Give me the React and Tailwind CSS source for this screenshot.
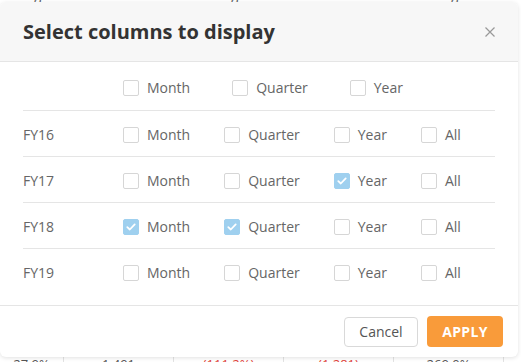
import React, { useState } from "react";

const years = ["FY16", "FY17", "FY18", "FY19"];

const initialChecked = {
  "FY17-Year": true,
  "FY18-Month": true,
  "FY18-Quarter": true,
};

const Check = ({ checked, onChange, label }) => (
  <label className="flex items-center gap-2 cursor-pointer select-none">
    <span
      onClick={onChange}
      className={`w-4 h-4 rounded-[2px] border flex items-center justify-center ${
        checked ? "bg-[#9fd0ef] border-[#9fd0ef]" : "bg-white border-[#d6d6d6]"
      }`}
    >
      {checked && (
        <svg width="10" height="8" viewBox="0 0 10 8" fill="none">
          <path d="M1.3 4.2 3.8 6.5 8.7 1.4" stroke="white" strokeWidth="1.8" strokeLinecap="round" strokeLinejoin="round" />
        </svg>
      )}
    </span>
    <span className="text-sm text-[#666]">{label}</span>
  </label>
);

// table peeking out behind the dialog
const BackTable = () => (
  <div className="absolute inset-0 bg-white text-[13px] text-[#555]">
    <div className="flex h-[6px] border-b border-[#e3e3e3] -mt-[13px]">
      {["Budget", "Actual", "Budget", "Actual", "Budget"].map((t, i) => (
        <div key={i} className="w-[110px] first:w-[64px] border-r border-[#e3e3e3] text-center leading-[16px]">
          {t}
        </div>
      ))}
    </div>
    <div className="absolute left-0 right-0 top-[356px] flex h-[20px]">
      {[
        ["27.9%", "text-[#555]"],
        ["1,491", "text-[#555]"],
        ["(111.2%)", "text-[#e0443b]"],
        ["(1,281)", "text-[#e0443b]"],
        ["269.0%", "text-[#555]"],
      ].map(([t, c], i) => (
        <div key={i} className={`w-[110px] first:w-[64px] border-r border-[#e3e3e3] text-center leading-[16px] ${c}`}>
          {t}
        </div>
      ))}
    </div>
  </div>
);

export default function App() {
  const [checked, setChecked] = useState(initialChecked);
  const toggle = (k) => setChecked((s) => ({ ...s, [k]: !s[k] }));

  return (
    <div className="relative w-[521px] h-[362px] overflow-hidden" style={{ fontFamily: '"Open Sans", sans-serif' }}>
      <BackTable />

      {/* Dialog */}
      <div className="absolute left-0 top-[2px] w-[518px] h-[355px] bg-white rounded-md shadow-[0_1px_4px_rgba(0,0,0,0.12)] flex flex-col overflow-hidden">
        <div className="h-[60px] shrink-0 bg-[#f7f7f7] border-b border-[#e5e5e5] flex items-center justify-between pl-[23px] pr-[23px]">
          <h2 className="text-[20px] font-bold text-[#333]">Select columns to display</h2>
          <button className="text-[#999]">
            <svg width="10" height="10" viewBox="0 0 10 10">
              <path d="M0.5 0.5 9.5 9.5M9.5 0.5 0.5 9.5" stroke="currentColor" strokeWidth="1.2" />
            </svg>
          </button>
        </div>

        <div className="px-[23px] flex-1">
          <div className="h-[49px] pt-[4px] flex items-center gap-[42px] pl-[100px] border-b border-[#e5e5e5]">
            <Check label="Month" checked={!!checked["all-Month"]} onChange={() => toggle("all-Month")} />
            <Check label="Quarter" checked={!!checked["all-Quarter"]} onChange={() => toggle("all-Quarter")} />
            <Check label="Year" checked={!!checked["all-Year"]} onChange={() => toggle("all-Year")} />
          </div>
          {years.map((y, i) => (
            <div
              key={y}
              className={`h-[46px] pt-[2px] flex items-center ${i < years.length - 1 ? "border-b border-[#e5e5e5]" : ""}`}
            >
              <div className="w-[100px] text-sm text-[#666]">{y}</div>
              <div className="flex items-center gap-[34px]">
                {["Month", "Quarter", "Year", "All"].map((c) => (
                  <Check key={c} label={c} checked={!!checked[`${y}-${c}`]} onChange={() => toggle(`${y}-${c}`)} />
                ))}
              </div>
            </div>
          ))}
        </div>

        <div className="h-[52px] shrink-0 border-t border-[#e5e5e5] flex items-center justify-end gap-[9px] pr-[15px]">
          <button className="h-[30px] w-[74px] rounded border border-[#d9d9d9] bg-white text-sm text-[#555]">Cancel</button>
          <button className="h-[31px] w-[76px] rounded bg-[#f99b3a] text-sm font-bold text-white tracking-wide">APPLY</button>
        </div>
      </div>
    </div>
  );
}
